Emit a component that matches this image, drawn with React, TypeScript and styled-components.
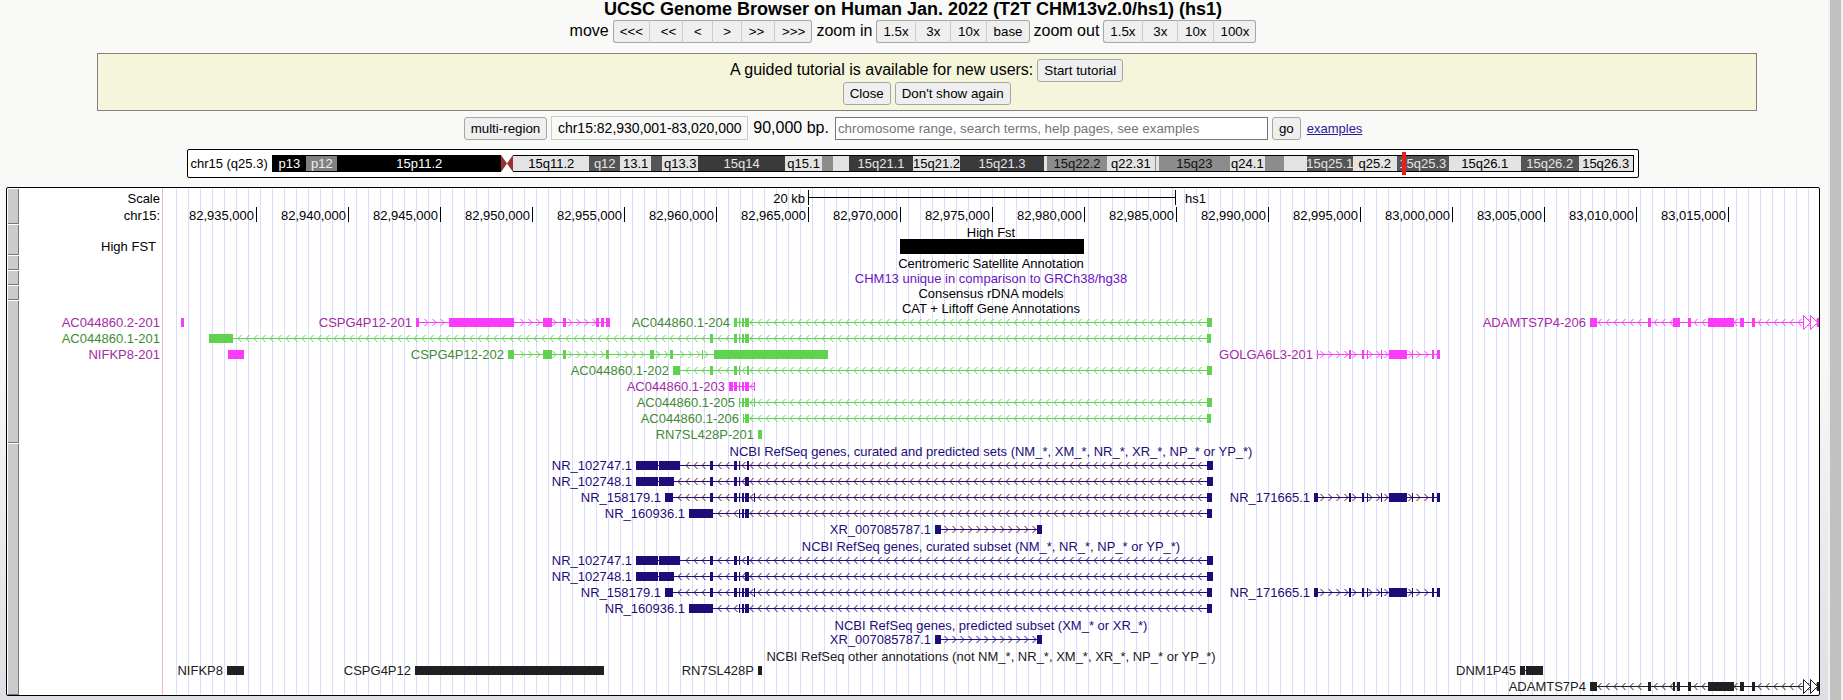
import React, { createContext, useContext, useLayoutEffect, useRef, useState } from 'react';
import styled, { createGlobalStyle } from 'styled-components';

const SANS = '"Liberation Sans", Arial, Helvetica, sans-serif';

const GlobalStyle = createGlobalStyle`
  *, *::before, *::after { box-sizing: border-box; }
  body {
    margin: 0;
    font-family: ${SANS};
    font-size: 16px;
    color: #000;
    background: #f9f9f7;
  }
`;

/* ---------- page frame ---------- */

const Page = styled.div`
  display: grid;
  grid-template-columns: minmax(0, 1fr) 15px;
  min-height: 100vh;
  background: linear-gradient(#f9f9f7 0%, #f9f9f7 50%, #e9eaec 78%, #dedfe4 100%);
`;

const Main = styled.main`
  display: flex;
  flex-direction: column;
  padding: 0 8px 4px 6px;
`;

const ScrollGutter = styled.div`
  background: #f1f1f1;
  padding: 0 2px;
`;

const ScrollThumb = styled.div`
  height: 100%;
  background: #c1c1c1;
`;

/* ---------- header controls ---------- */

const Title = styled.h1`
  margin: 0;
  font-size: 18px;
  line-height: 18px;
  font-weight: bold;
  text-align: center;
`;

const ControlRow = styled.div`
  display: flex;
  justify-content: center;
  align-items: baseline;
  gap: 4px;
  line-height: 21px;
`;

const Button = styled.button`
  height: 23px;
  padding: 0 6px;
  font-family: ${SANS};
  line-height: 21px;
  color: #000;
  background: #efefef;
  border: 1px solid #a6a6a6;
  border-radius: 3px;
  white-space: pre;
`;

const ButtonGroup = styled.div`
  display: flex;

  ${Button} {
    border-radius: 0;
    border-right-color: #ccc;
    border-left-width: 1px;
    border-left-color: #ccc;
  }
  ${Button} + ${Button} { border-left-width: 0; padding-left: 7px; }
  ${Button}:first-child {
    border-left-color: #a6a6a6;
    border-radius: 3px 0 0 3px;
  }
  ${Button}:last-child {
    border-right-color: #a6a6a6;
    border-radius: 0 3px 3px 0;
  }
`;

const Navigation = styled(ControlRow)`
  margin-top: 2px;
`;

const Notice = styled.section`
  margin: 10px 3.5% 0 5%;
  padding: 5px 0;
  background: #f5f5dc;
  border: 1px solid #808080;
`;

const SearchForm = styled.form`
  display: flex;
  justify-content: center;
  align-items: baseline;
  gap: 4px;
  margin-top: 5px;
  line-height: 21px;
`;

const Position = styled.span`
  height: 24px;
  width: 197px;
  font-size: 14px;
  line-height: 22px;
  text-align: center;
  border: 1px solid #ccc;
`;

const Size = styled.span`
  margin: 0 2px 0 1px;
`;

const SearchBox = styled.input`
  width: 433px;
  height: 23px;
  padding: 0 2px;
  font-family: ${SANS};
  background: #fff;
  border: 1px solid #767676;
  &::placeholder { color: #757575; }
`;

const HelpLink = styled.a`
  margin-left: 2px;
  font-size: 13px;
  color: #2a1a9c;
`;

/* ---------- chromosome ideogram ---------- */

const Ideogram = styled.section`
  display: flex;
  align-items: center;
  align-self: center;
  width: 80%;
  height: 29px;
  margin-top: 9px;
  padding: 0 4px 0 2px;
  background: #fff;
  border: 1px solid #000;
  border-radius: 2px;
  font-size: 13px;
  line-height: 15px;
`;

const IdeogramLabel = styled.div`
  flex: 0 0 82px;
  white-space: nowrap;
`;

const Chromosome = styled.div`
  position: relative;
  flex: 1;
  display: flex;
  height: 17px;
`;

const Band = styled.div<{ $size: number; $bg: string; $fg: string }>`
  flex: ${({ $size }) => $size} 1 0;
  min-width: 0;
  display: flex;
  justify-content: center;
  overflow: hidden;
  white-space: nowrap;
  color: ${({ $fg }) => $fg};
  background: ${({ $bg }) => $bg};
  border: solid #000;
  border-width: 1px 0;
  &:last-of-type { border-right-width: 1px; }
`;

const Centromere = styled.svg`
  flex: 12 1 0;
  min-width: 0;
  height: 17px;
`;

const RegionMarker = styled.span`
  position: absolute;
  top: -3px;
  left: 83%;
  width: 4px;
  height: 23px;
  background: #f51a1a;
`;

const BLACK: [string, string] = ['#000', '#fff'];
const DARK: [string, string] = ['#3a3a3a', '#e6e6e6'];
const MID: [string, string] = ['#555', '#e6e6e6'];
const GRAY: [string, string] = ['#8c8c8c', '#111'];
const SILVER: [string, string] = ['#808080', '#eee'];
const LIGHT: [string, string] = ['#e3e3e3', '#000'];

const P_ARM: [string, number, [string, string]][] = [
  ['p13', 34, BLACK],
  ['p12', 31, SILVER],
  ['15p11.2', 164, BLACK],
];

const Q_ARM: [string, number, [string, string]][] = [
  ['15q11.2', 76, LIGHT],
  ['q12', 31, MID],
  ['13.1', 31, LIGHT],
  ['', 11, MID],
  ['q13.3', 36, LIGHT],
  ['15q14', 87, DARK],
  ['q15.1', 37, LIGHT],
  ['', 11, GRAY],
  ['', 16, LIGHT],
  ['15q21.1', 64, DARK],
  ['15q21.2', 47, LIGHT],
  ['15q21.3', 84, DARK],
  ['', 3, LIGHT],
  ['15q22.2', 60, GRAY],
  ['q22.31', 48, LIGHT],
  ['', 1, GRAY],
  ['', 3, LIGHT],
  ['15q23', 71, GRAY],
  ['q24.1', 35, LIGHT],
  ['', 19, GRAY],
  ['', 23, LIGHT],
  ['15q25.1', 46, MID],
  ['q25.2', 44, LIGHT],
  ['15q25.3', 52, MID],
  ['15q26.1', 72, LIGHT],
  ['15q26.2', 58, MID],
  ['15q26.3', 54, LIGHT],
];

/* ---------- track image ---------- */

const Tracks = styled.section`
  margin-top: 9px;
  background: #fff;
  border: 1px solid #000;
  border-radius: 2px;
  overflow: hidden;
  font-size: 13px;
`;

const TrackRow = styled.div`
  display: grid;
  grid-template-columns: 11px 143px minmax(0, 1fr);
  padding-left: 1px;
`;

const Handle = styled.button`
  margin: 1px 0 0;
  padding: 0;
  background: #cbcbcb;
  border: solid #777;
  border-width: 0 1px 1px 0;
`;

const SideLabels = styled.div<{ $top: number; $inset: number }>`
  padding: ${({ $top, $inset }) => `${$top}px ${$inset}px 0 0`};
  line-height: 17px;
  text-align: right;
`;

const Lane = styled.div`
  border-left: 1px solid #ffb4b4;
  background-image: linear-gradient(#fff, #fff), linear-gradient(90deg, #dcdcff 1px, transparent 1px);
  background-size: 12px 100%, 12px 100%;
  background-position: 0 0, 1px 0;
  background-repeat: no-repeat, repeat;
`;

const Caption = styled.div<{ $color?: string }>`
  height: 15px;
  line-height: 17px;
  text-align: center;
  white-space: nowrap;
  color: ${({ $color = '#000' }) => $color};
`;

const Plot = styled.svg`
  display: block;
  width: 100%;
  overflow: visible;
  font-family: ${SANS};
  font-size: 13px;
`;

/* The displayed region is divided into 1656 steps; ScaleContext turns a step into a pixel. */
const STEPS = 1656;
const ScaleContext = createContext<(v: number) => number>((v) => v);

type Palette = { bar: string; text: string; arrow: string };
const MAGENTA: Palette = { bar: '#fa3cfa', text: '#a42aa4', arrow: '#fa3cfa' };
const GREEN: Palette = { bar: '#60d34e', text: '#3f8a34', arrow: '#60d34e' };
const NAVY: Palette = { bar: '#1e0c78', text: '#1e0c78', arrow: '#1e0c78' };
const NAVY_RED: Palette = { ...NAVY, arrow: '#6e0a14' };
const INK: Palette = { bar: '#202020', text: '#202020', arrow: '#202020' };

type Gene = {
  name: string;
  tone: Palette;
  strand?: '+' | '-';
  exons: [number, number][];
  side?: boolean;
  continues?: boolean;
};

const ROW = 16;

function GeneModel({ gene, row }: { gene: Gene; row: number }) {
  const x = useContext(ScaleContext);
  const { tone, exons, strand } = gene;
  const top = row * ROW;
  const mid = top + 7.5;
  const start = x(exons[0][0]);
  const last = exons[exons.length - 1];
  const end = x(last[0] + last[1]);

  let arrows = '';
  if (strand) {
    for (let i = 0; i < exons.length - 1; i++) {
      const from = x(exons[i][0] + exons[i][1]);
      const to = x(exons[i + 1][0]);
      const phase = strand === '-' ? 3 : 0;
      for (let t = Math.ceil((from - phase) / 8) * 8 + phase; t < to; t += 8) {
        if (strand === '-' && t + 3 <= to) arrows += `M${t + 3.5} ${mid - 3.5}L${t} ${mid}L${t + 3.5} ${mid + 3.5}`;
        if (strand === '+' && t - 3 >= from) arrows += `M${t - 2.5} ${mid - 3.5}L${t + 1} ${mid}L${t - 2.5} ${mid + 3.5}`;
      }
    }
  }

  return (
    <g>
      <text x={gene.side ? -3 : start - 4} y={top + 12} textAnchor="end" fill={tone.text}>
        {gene.name}
      </text>
      <path d={arrows} fill="none" stroke={tone.arrow} strokeWidth="1" />
      <rect x={start} y={top + 7} width={end - start} height="1" fill={tone.bar} />
      {exons.map(([s, w]) => (
        <rect key={s} x={x(s)} y={top + 3} width={Math.max(1, x(s + w) - x(s))} height="9" fill={tone.bar} />
      ))}
      {gene.continues &&
        [x(STEPS) - 16, x(STEPS) - 9].map((t) => (
          <path key={t} d={`M${t + 0.5} ${top + 0.5}V${top + 14.5}L${t + 7.5} ${mid}Z`} fill="#fff" stroke={tone.bar} />
        ))}
    </g>
  );
}

function GenePlot({ rows }: { rows: Gene[][] }) {
  return (
    <Plot height={rows.length * ROW}>
      {rows.map((genes, row) => genes.map((gene) => <GeneModel key={gene.name} gene={gene} row={row} />))}
    </Plot>
  );
}

const TICKS = Array.from({ length: 17 }, (_, i) => ({
  at: 93 + 92 * i,
  label: (82935000 + 5000 * i).toLocaleString('en-US'),
}));

function Ruler() {
  const x = useContext(ScaleContext);
  return (
    <Plot height="36">
      <g fill="#000">
        <text x={x(645) - 3} y="15" textAnchor="end">20 kb</text>
        <rect x={x(645)} y="2" width="1" height="15" />
        <rect x={x(645)} y="9" width={x(1012) - x(645)} height="1" />
        <rect x={x(1012)} y="2" width="1" height="15" />
        <text x={x(1012) + 10} y="15">hs1</text>
        {TICKS.map((t) => (
          <React.Fragment key={t.at}>
            <text x={x(t.at) - 2} y="32" textAnchor="end">{t.label}</text>
            <rect x={x(t.at)} y="19" width="1" height="15" />
          </React.Fragment>
        ))}
      </g>
    </Plot>
  );
}

function HighFstBar() {
  const x = useContext(ScaleContext);
  return (
    <Plot height="16">
      <rect x={x(737)} y="0" width={x(921) - x(737)} height="15" />
    </Plot>
  );
}

const GOLGA_TAIL: [number, number][] = [
  [1186, 2], [1199, 2], [1204, 1], [1218, 1], [1226, 18], [1249, 1], [1269, 2], [1274, 3],
];

const CAT_ROWS: Gene[][] = [
  [
    { name: 'AC044860.2-201', tone: MAGENTA, side: true, exons: [[18, 3]] },
    { name: 'CSPG4P12-201', tone: MAGENTA, strand: '+', exons: [[253, 3], [286, 65], [380, 9], [400, 3], [433, 3], [438, 3], [443, 4]] },
    { name: 'AC044860.1-204', tone: GREEN, strand: '-', exons: [[571, 3], [576, 1], [579, 2], [582, 4], [1044, 5]] },
    { name: 'ADAMTS7P4-206', tone: MAGENTA, strand: '-', continues: true, exons: [[1427, 7], [1485, 3], [1510, 7], [1525, 3], [1545, 26], [1577, 4], [1589, 3], [1654, 2]] },
  ],
  [{ name: 'AC044860.1-201', tone: GREEN, strand: '-', side: true, exons: [[46, 24], [547, 3], [571, 3], [576, 1], [579, 2], [582, 4], [1044, 4]] }],
  [
    { name: 'NIFKP8-201', tone: MAGENTA, side: true, exons: [[65, 16]] },
    { name: 'CSPG4P12-202', tone: GREEN, strand: '+', exons: [[345, 6], [380, 9], [400, 3], [443, 3], [487, 4], [507, 3], [539, 1], [551, 114]] },
    { name: 'GOLGA6L3-201', tone: MAGENTA, strand: '+', exons: [[1154, 1], ...GOLGA_TAIL] },
  ],
  [{ name: 'AC044860.1-202', tone: GREEN, strand: '-', exons: [[510, 7], [547, 3], [571, 3], [576, 1], [584, 2], [1044, 5]] }],
  [{ name: 'AC044860.1-203', tone: MAGENTA, strand: '-', exons: [[566, 4], [571, 3], [576, 1], [579, 2], [582, 4], [591, 1]] }],
  [{ name: 'AC044860.1-205', tone: GREEN, strand: '-', exons: [[576, 1], [579, 2], [582, 4], [591, 1], [1044, 5]] }],
  [{ name: 'AC044860.1-206', tone: GREEN, strand: '-', exons: [[580, 1], [582, 4], [1044, 4]] }],
  [{ name: 'RN7SL428P-201', tone: GREEN, exons: [[595, 4]] }],
];

const curatedRows = (tone: Palette): Gene[][] => [
  [{ name: 'NR_102747.1', tone, strand: '-', exons: [[473, 22], [496, 21], [547, 3], [571, 3], [576, 1], [584, 2], [1044, 6]] }],
  [{ name: 'NR_102748.1', tone, strand: '-', exons: [[473, 22], [496, 15], [547, 3], [571, 3], [576, 1], [582, 4], [1044, 6]] }],
  [
    { name: 'NR_158179.1', tone, strand: '-', exons: [[502, 8], [547, 3], [571, 3], [576, 1], [579, 2], [582, 4], [591, 1], [1044, 5]] },
    { name: 'NR_171665.1', tone, strand: '+', exons: [[1151, 4], ...GOLGA_TAIL] },
  ],
  [{ name: 'NR_160936.1', tone, strand: '-', exons: [[526, 24], [576, 1], [579, 2], [582, 4], [1044, 5]] }],
];

const predictedRows = (tone: Palette): Gene[][] => [
  [{ name: 'XR_007085787.1', tone, strand: '+', exons: [[772, 6], [874, 5]] }],
];

const OTHER_ROWS: Gene[][] = [
  [
    { name: 'NIFKP8', tone: INK, exons: [[64, 17]] },
    { name: 'CSPG4P12', tone: INK, exons: [[252, 189]] },
    { name: 'RN7SL428P', tone: INK, exons: [[595, 4]] },
    { name: 'DNM1P45', tone: INK, exons: [[1357, 5], [1363, 17]] },
  ],
  [{ name: 'ADAMTS7P4', tone: INK, strand: '-', continues: true, exons: [[1427, 7], [1485, 3], [1510, 2], [1514, 3], [1525, 3], [1545, 26], [1577, 4], [1589, 3], [1654, 2]] }],
];

type TrackProps = {
  name: string;
  side?: React.ReactNode;
  sideTop?: number;
  sideInset?: number;
  laneRef?: React.Ref<HTMLDivElement>;
  children: React.ReactNode;
};

function Track({ name, side, sideTop = 0, sideInset = 2, laneRef, children }: TrackProps) {
  return (
    <TrackRow>
      <Handle type="button" aria-label={`Configure ${name}`} />
      <SideLabels $top={sideTop} $inset={sideInset}>{side}</SideLabels>
      <Lane ref={laneRef}>{children}</Lane>
    </TrackRow>
  );
}

function TrackImage() {
  const laneRef = useRef<HTMLDivElement>(null);
  const [width, setWidth] = useState(STEPS);

  useLayoutEffect(() => {
    const lane = laneRef.current;
    if (!lane) return;
    const measure = () => setWidth(lane.clientWidth);
    measure();
    const observer = new ResizeObserver(measure);
    observer.observe(lane);
    return () => observer.disconnect();
  }, []);

  const toPixel = (v: number) => Math.round((v * width) / STEPS);

  return (
    <ScaleContext.Provider value={toPixel}>
      <Tracks>
        <Track name="ruler" side={<>Scale<br />chr15:</>} sideTop={2} laneRef={laneRef}>
          <Ruler />
        </Track>
        <Track name="High FST" side="High FST" sideTop={14} sideInset={6}>
          <Caption>High Fst</Caption>
          <HighFstBar />
        </Track>
        <Track name="satellites">
          <Caption>Centromeric Satellite Annotation</Caption>
        </Track>
        <Track name="CHM13 unique">
          <Caption $color="#6a12c4">CHM13 unique in comparison to GRCh38/hg38</Caption>
        </Track>
        <Track name="rDNA models">
          <Caption>Consensus rDNA models</Caption>
        </Track>
        <Track name="gene annotations">
          <Caption>CAT + Liftoff Gene Annotations</Caption>
          <GenePlot rows={CAT_ROWS} />
        </Track>
        <Track name="NCBI RefSeq">
          <Caption $color={NAVY.text}>
            NCBI RefSeq genes, curated and predicted sets (NM_*, XM_*, NR_*, XR_*, NP_* or YP_*)
          </Caption>
          <GenePlot rows={[...curatedRows(NAVY_RED), ...predictedRows(NAVY_RED)]} />
          <Caption $color={NAVY.text}>NCBI RefSeq genes, curated subset (NM_*, NR_*, NP_* or YP_*)</Caption>
          <GenePlot rows={curatedRows(NAVY)} />
          <Caption $color={NAVY.text}>NCBI RefSeq genes, predicted subset (XM_* or XR_*)</Caption>
          <GenePlot rows={predictedRows(NAVY)} />
          <Caption $color={INK.text}>
            NCBI RefSeq other annotations (not NM_*, NR_*, XM_*, XR_*, NP_* or YP_*)
          </Caption>
          <GenePlot rows={OTHER_ROWS} />
        </Track>
      </Tracks>
    </ScaleContext.Provider>
  );
}

function Buttons({ labels }: { labels: string[] }) {
  return (
    <ButtonGroup>
      {labels.map((label) => (
        <Button key={label} type="button">{label}</Button>
      ))}
    </ButtonGroup>
  );
}

export default function App() {
  return (
    <Page>
      <GlobalStyle />
      <Main>
        <Title>UCSC Genome Browser on Human Jan. 2022 (T2T CHM13v2.0/hs1) (hs1)</Title>
        <Navigation>
          <span>move</span>
          <Buttons labels={['<<<', ' <<', ' < ', ' > ', '>> ', '>>>']} />
          <span>zoom in</span>
          <Buttons labels={['1.5x', ' 3x ', '10x', 'base']} />
          <span>zoom out</span>
          <Buttons labels={['1.5x', ' 3x ', '10x', '100x']} />
        </Navigation>
        <Notice>
          <ControlRow>
            <span>A guided tutorial is available for new users:</span>
            <Button type="button">Start tutorial</Button>
          </ControlRow>
          <ControlRow>
            <Button type="button">Close</Button>
            <Button type="button">Don't show again</Button>
          </ControlRow>
        </Notice>
        <SearchForm onSubmit={(e) => e.preventDefault()}>
          <Button type="button">multi-region</Button>
          <Position>chr15:82,930,001-83,020,000</Position>
          <Size>90,000 bp.</Size>
          <SearchBox
            type="text"
            aria-label="Position or search term"
            placeholder="chromosome range, search terms, help pages, see examples"
          />
          <Button type="submit">go</Button>
          <HelpLink href="#examples">examples</HelpLink>
        </SearchForm>
        <Ideogram>
          <IdeogramLabel>chr15 (q25.3)</IdeogramLabel>
          <Chromosome>
            {P_ARM.map(([name, size, [bg, fg]]) => (
              <Band key={name} $size={size} $bg={bg} $fg={fg}>{name}</Band>
            ))}
            <Centromere viewBox="0 0 12 17" preserveAspectRatio="none" aria-hidden="true">
              <path d="M0 0L6 8.5L0 17ZM12 0L6 8.5L12 17Z" fill="#963232" />
            </Centromere>
            {Q_ARM.map(([name, size, [bg, fg]], i) => (
              <Band key={i} $size={size} $bg={bg} $fg={fg}>{name}</Band>
            ))}
            <RegionMarker />
          </Chromosome>
        </Ideogram>
        <TrackImage />
      </Main>
      <ScrollGutter>
        <ScrollThumb />
      </ScrollGutter>
    </Page>
  );
}
